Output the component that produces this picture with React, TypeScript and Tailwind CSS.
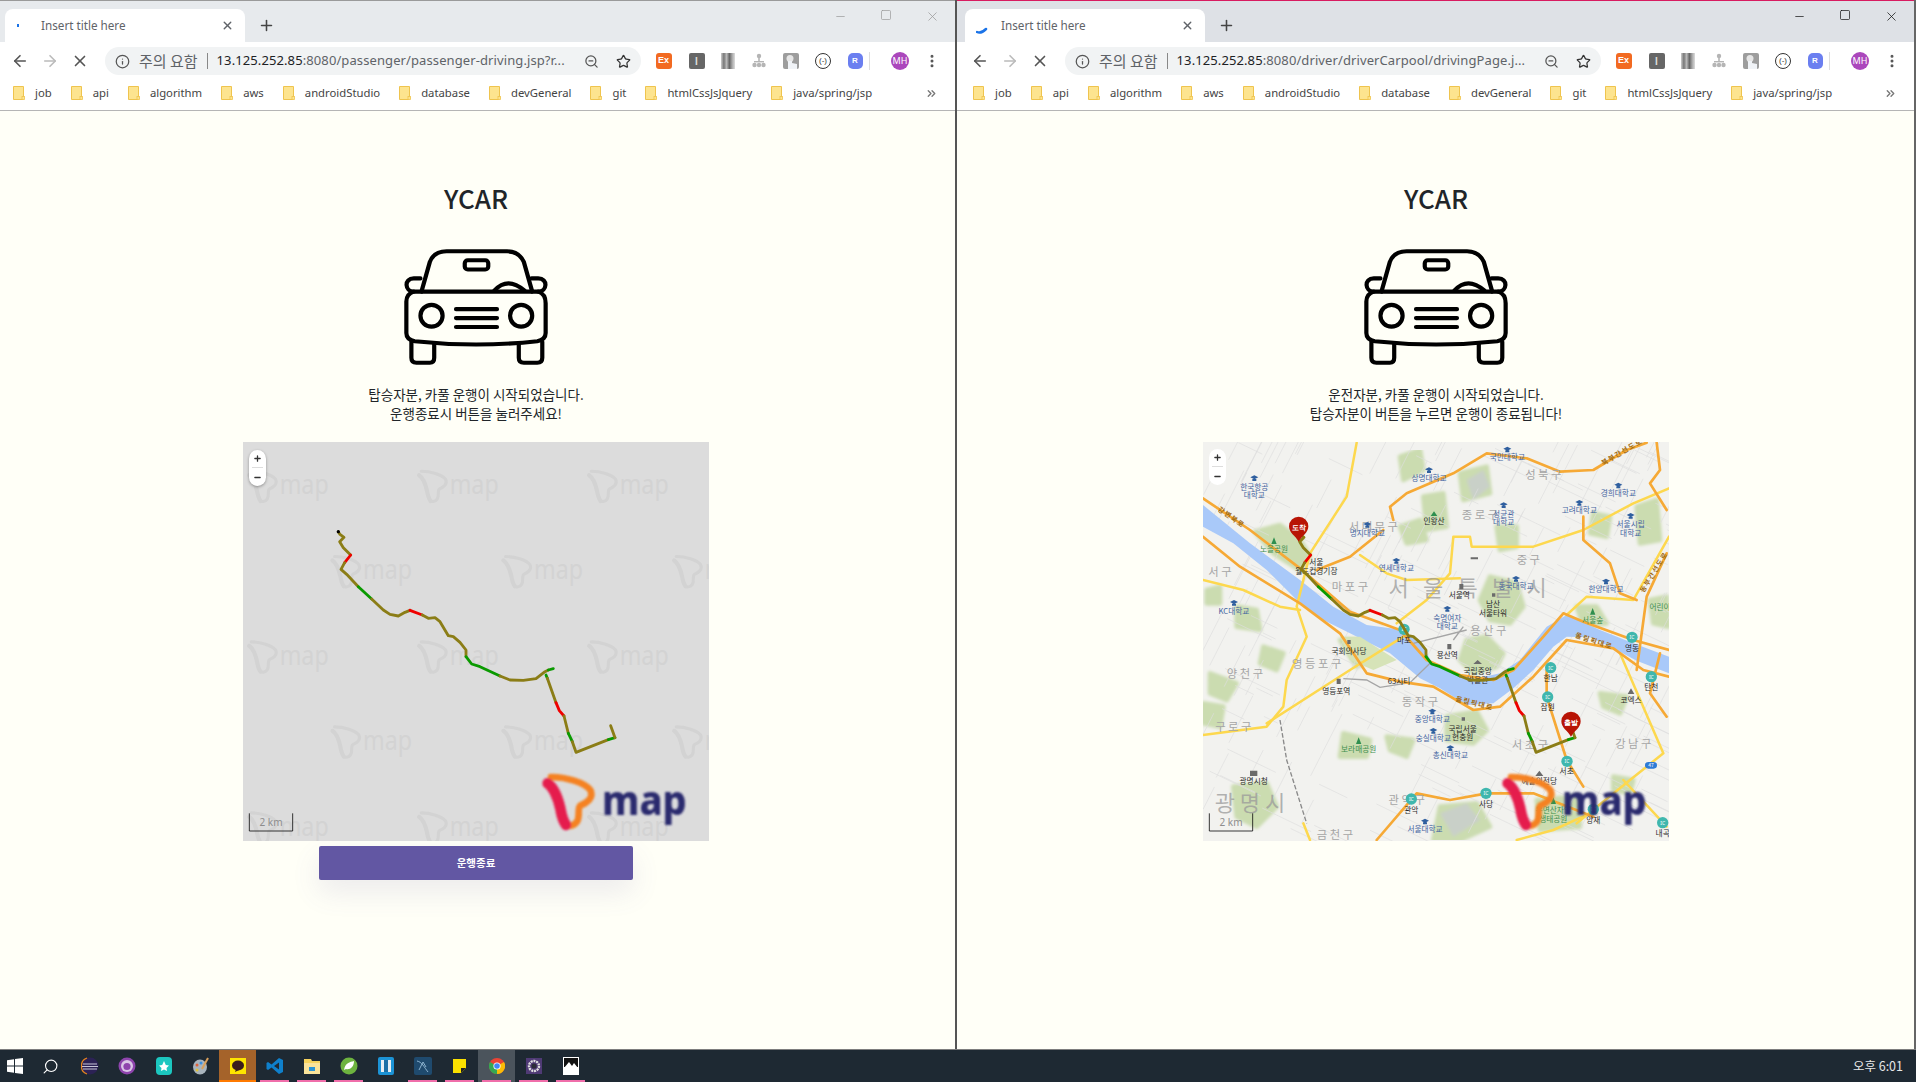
import { ArrowLeft, ArrowRight, X, Info, ZoomOut, Star, EllipsisVertical, Plus, Minus, Square, ChevronsRight, Search } from "lucide-react";

const OLIVE = "#8b7d16";
const route: [string, string][] = [
  [OLIVE, "M295,276 L300,283 L312,292 L299,305 L310,323 L332,345"],
  ["#f00000", "M332,345 L314,368"],
  [OLIVE, "M314,368 L303,388 L320,403 L355,440"],
  ["#0a9a00", "M355,440 L395,477"],
  [OLIVE, "M395,477 L430,510 L450,523 L475,528 L495,517 L510,511"],
  ["#f00000", "M510,511 L547,525"],
  [OLIVE, "M547,525 L565,535 L585,533 L600,545 L625,587 L640,590 L660,607 L678,630 L678,650"],
  ["#0a9a00", "M678,650 L695,672 L720,680 L780,708"],
  [OLIVE, "M780,708 L810,720 L850,721 L888,716 L915,695 L925,690"],
  ["#0a9a00", "M925,690 L940,686 M918,705 L922,715"],
  [OLIVE, "M922,715 L948,788"],
  ["#f00000", "M948,788 L958,812 L972,828"],
  [OLIVE, "M972,828 L985,880"],
  ["#0a9a00", "M985,880 L997,905"],
  [OLIVE, "M997,905 L1008,937 L1105,899"],
  ["#0a9a00", "M1105,899 L1125,893"],
  [OLIVE, "M1125,893 L1112,857"],
];

function Route() {
  return (
    <g fill="none" strokeWidth="8.5" strokeLinejoin="round" strokeLinecap="round">
      {route.map(([c, d], i) => (
        <path key={i} d={d} stroke={c} />
      ))}
    </g>
  );
}

function TShape({ x, y, s, mono }: { x: number; y: number; s: number; mono?: string }) {
  return (
    <g transform={`translate(${x} ${y}) scale(${s})`} fill="none" strokeLinecap="round" strokeLinejoin="round">
      <path d="M30,6 C75,6 130,22 148,45 C160,70 135,85 118,92 C108,100 118,125 108,140 C100,152 85,155 75,150" stroke={mono ?? "#f58220"} strokeWidth={mono ? 15 : 20} />
      <path d="M20,25 C35,35 50,65 58,100 C62,125 68,140 75,150" stroke={mono ?? "#e51f4e"} strokeWidth={mono ? 20 : 32} />
    </g>
  );
}

function Logo() {
  return (
    <g filter="url(#logoblur)">
      <TShape x={903} y={1005} s={1} />
      <text x={1086} y={1126} fontSize={124} fontWeight={800} fill="#2b2a6e" textLength={254} lengthAdjust="spacingAndGlyphs" fontFamily="'Noto Sans', sans-serif">
        map
      </text>
    </g>
  );
}

const marks = [
  [15, 90], [525, 90], [1035, 90],
  [265, 346], [778, 346], [1290, 346],
  [15, 602], [525, 602], [1035, 602],
  [265, 857], [778, 857], [1290, 857],
  [15, 1115], [525, 1115], [1035, 1115],
];

function Watermarks() {
  return (
    <g>
      {marks.map(([x, y], i) => (
        <g key={i}>
          <TShape x={x} y={y} s={0.62} mono="#d3d3d3" />
          <text x={x + 104} y={y + 72} fontSize={84} fill="#d3d3d3" textLength={147} lengthAdjust="spacingAndGlyphs" fontFamily="'Noto Sans', sans-serif">
            map
          </text>
        </g>
      ))}
    </g>
  );
}

function Scale() {
  return (
    <g>
      <path d="M28,1120 V1173 H158 V1120" fill="none" stroke="#111" strokeWidth="2.5" />
      <text x={93} y={1157} fontSize={30} textAnchor="middle" fill="#8d8d8d" fontFamily="'Noto Sans', sans-serif">
        2 km
      </text>
    </g>
  );
}

const river =
  "M9,195 L150,310 L300,420 L400,500 L500,555 L610,570 L670,620 L700,675 L820,718 L900,700 L960,660 L1040,560 L1100,525 L1200,570 L1300,610 L1407,650 L1407,700 L1310,662 L1240,625 L1170,592 L1100,590 L1060,620 L1000,690 L940,745 L880,790 L800,795 L720,745 L660,715 L570,640 L450,580 L370,540 L300,490 L200,390 L100,310 L9,260 Z";

const parks = [
  "M165,275 L240,255 L300,300 L330,350 L300,390 L220,340 Z",
  "M800,600 L860,590 L910,640 L890,680 L820,700 L780,660 Z",
  "M870,410 L950,430 L970,500 L930,550 L870,540 L840,480 Z",
  "M740,830 L830,815 L860,870 L820,910 L740,900 Z",
  "M420,600 L500,600 L520,650 L470,680 Z",
  "M600,50 L660,30 L670,90 L610,120 Z",
  "M1130,500 L1190,500 L1220,550 L1150,555 Z",
  "M430,880 L510,900 L500,950 L420,950 Z",
  "M100,1040 L200,1030 L230,1100 L170,1160 L110,1130 Z",
  "M720,1100 L830,1090 L870,1160 L780,1200 L700,1200 Z",
  "M1310,200 L1370,180 L1380,300 L1320,310 Z",
  "M30,700 L110,730 L80,780 L30,760 Z",
  "M110,500 L170,510 L180,570 L110,560 Z",
  "M1200,760 L1280,770 L1260,820 L1210,800 Z",
  "M1010,1080 L1130,1070 L1140,1160 L1020,1170 Z",
  "M670,170 L730,160 L740,260 L680,270 Z",
  "M890,260 L950,260 L950,320 L900,330 Z",
  "M780,100 L860,80 L870,160 L790,180 Z",
  "M10,790 L70,800 L60,860 L10,850 Z",
  "M560,890 L640,900 L620,950 L570,930 Z",
  "M600,260 L660,240 L680,300 L620,310 Z",
  "M1350,480 L1400,470 L1405,560 L1360,550 Z",
  "M20,450 L60,440 L60,490 L20,490 Z",
  "M1240,1010 L1300,1020 L1290,1060 L1240,1050 Z",
  "M190,620 L250,640 L230,690 L180,670 Z",
  "M1180,220 L1230,230 L1220,290 L1170,280 Z",
];

const orange = [
  "M9,175 L150,270 L300,385 L450,515 L600,570 L680,660 L780,705 L880,720 L940,690 L1030,590 L1090,520 L1150,545 L1300,600 L1407,630",
  "M9,290 L120,380 L300,490 L420,580 L500,700 L600,725 L700,740 L820,810 L900,800 L1000,710 L1100,600 L1240,625 L1330,690 L1407,710",
  "M580,240 L570,200 L620,160 L760,100 L860,40 L980,55 L1080,95 L1180,90 L1280,30 L1340,8",
  "M1370,8 L1380,90 L1350,130 L1400,210",
  "M350,390 L450,350 L550,270",
  "M1150,230 L1150,300 L1230,370 L1260,460 L1310,480",
  "M530,1200 L650,1060 L750,1080 L860,1060 L1000,1060 L1180,1130",
  "M1040,690 L1040,770 L1100,960 L1150,1040",
  "M1400,340 L1340,470 L1310,690",
  "M1380,640 L1350,760 L1400,830",
];
const yellow = [
  "M470,8 L440,170 L330,340 L290,500 L320,590 L260,720 L250,800 L200,860 L9,885",
  "M590,550 L680,480 L750,400 L760,290 L810,290 L815,320 L1000,320 L1150,270 L1300,190 L1407,145",
  "M200,850 L450,690 L610,590",
  "M1260,640 L1390,940 L1290,1020 L1130,1150",
  "M480,345 L560,400 L620,420 L780,415",
  "M1100,525 L1160,470 L1300,480 L1407,290",
  "M9,420 L130,450 L240,500 L300,510",
  "M950,1200 L1060,1170 L1170,1120",
  "M1270,1020 L1400,1160",
  "M310,1150 L330,1200",
];

let seed = 7;
const rnd = () => {
  seed = (seed * 16807) % 2147483647;
  return seed / 2147483647;
};
const thin = Array.from({ length: 300 }, () => {
  const x = 9 + rnd() * 1398;
  const y = 6 + rnd() * 1197;
  const a = rnd() > 0.5 ? 0.45 : -1.1;
  const l = 40 + rnd() * 170;
  return [x, y, x + Math.cos(a) * l, y + Math.sin(a) * l];
});

type L = [number, number, string];
const blue: L[] = [
  [163, 143, "한국항공"], [163, 167, "대학교"], [687, 114, "상명대학교"], [922, 52, "국민대학교"], [1255, 160, "경희대학교"],
  [1138, 212, "고려대학교"], [911, 223, "성균관"], [911, 248, "대학교"], [1292, 254, "서울시립"], [1292, 279, "대학교"],
  [502, 279, "명지대학교"], [589, 385, "연세대학교"], [948, 439, "동국대학교"], [1218, 447, "한양대학교"], [742, 535, "숙명여자"],
  [742, 559, "대학교"], [102, 513, "KC대학교"], [697, 837, "중앙대학교"], [700, 895, "숭실대학교"], [751, 947, "총신대학교"],
  [675, 1167, "서울대학교"],
];
const caps: [number, number][] = [
  [163, 112], [687, 88], [922, 26], [1255, 134], [1138, 186], [911, 193], [1292, 225], [502, 252], [589, 360], [948, 414], [1218, 422],
  [742, 504], [102, 486], [697, 812], [700, 870], [751, 922], [675, 1142],
];
const green: L[] = [[222, 327, "노을공원"], [1178, 540, "서울숲"], [476, 929, "보라매공원"], [1380, 503, "어린이"], [1060, 1112, "우면산자연"], [1060, 1138, "생태공원"]];
const dark: L[] = [
  [349, 368, "서울"], [349, 394, "월드컵경기장"], [778, 465, "서울역"], [879, 494, "남산"], [879, 519, "서울타워"], [612, 600, "마포"],
  [742, 646, "용산역"], [447, 633, "국회의사당"], [597, 725, "63시티"], [409, 753, "영등포역"], [833, 695, "국립중앙"], [833, 722, "박물관"],
  [788, 867, "국립서울"], [788, 892, "현충원"], [1052, 715, "한남"], [1043, 803, "잠원"], [1296, 624, "영동"], [1354, 741, "탄천"],
  [1293, 780, "코엑스"], [1100, 995, "서초"], [858, 1093, "사당"], [634, 1110, "관악"], [1180, 1140, "양재"], [1388, 1180, "내곡"],
  [161, 1025, "광명시청"], [1018, 1025, "예술의전당"], [702, 244, "인왕산"],
];
const district: L[] = [
  [1030, 106, "성 북 구"], [840, 224, "종 로 구"], [520, 260, "서 대 문 구"], [450, 440, "마 포 구"], [985, 360, "중 구"], [865, 572, "용 산 구"],
  [350, 672, "영 등 포 구"], [135, 702, "양 천 구"], [100, 862, "구 로 구"], [660, 785, "동 작 구"], [990, 915, "서 초 구"], [1300, 912, "강 남 구"],
  [620, 1080, "관 악 구"], [405, 1185, "금 천 구"], [60, 395, "서 구"],
];
const ics: [number, number][] = [[612, 568], [1052, 683], [1043, 771], [1296, 592], [1354, 710], [1101, 964], [858, 1060], [634, 1077], [1180, 1108], [1388, 1148]];
const roadNames: [number, number, number, string][] = [
  [90, 238, 35, "강변북로"], [1180, 610, 18, "올림픽대로"], [822, 797, 14, "올림픽대로"], [1368, 400, -58, "동부간선도로"], [1270, 42, -30, "북부간선도로"],
];

function Pin({ x, y, label }: { x: number; y: number; label: string }) {
  return (
    <g>
      <path d={`M${x},${y + 40} C${x - 10},${y + 22} ${x - 29},${y + 14} ${x - 29},${y - 6} A29,29 0 1 1 ${x + 29},${y - 6} C${x + 29},${y + 14} ${x + 10},${y + 22} ${x},${y + 40} Z`} fill="#b81405" />
      <text x={x} y={y + 4} fontSize={22} fill="#fff" textAnchor="middle" fontWeight={700}>
        {label}
      </text>
    </g>
  );
}

function StreetMap() {
  return (
    <g fontFamily="'Noto Sans CJK KR', sans-serif">
      <rect x="9" y="6" width="1398" height="1197" fill="#f2f2ef" />
      <g filter="url(#soft)">
        {parks.map((d, i) => (
          <path key={i} d={d} fill="#cbdcb0" stroke="#cbdcb0" strokeWidth="14" strokeLinejoin="round" />
        ))}
        <path d="M800,120 L850,90 L870,140 L820,180 Z M720,1120 L800,1090 L840,1140 L760,1190 Z" fill="#c9d0c8" />
      </g>
      {thin.map((l, i) => (
        <line key={i} x1={l[0]} y1={l[1]} x2={l[2]} y2={l[3]} stroke="#dedede" strokeWidth="2" />
      ))}
      <path d={river} fill="#a9c9f9" />
      <path d="M420,590 L480,590 L590,660 L520,690 L450,660 Z" fill="#d6e3b8" />
      <path d="M240,840 L260,960 L320,1150" fill="none" stroke="#8a8a8a" strokeWidth="4" strokeDasharray="14 6" />
      <path d="M430,716 L500,720 L540,742 L630,728 L690,670 M640,610 L800,570 M760,600 L790,560" fill="none" stroke="#a5a5a5" strokeWidth="4" />
      <g fill="none" strokeLinejoin="round" strokeLinecap="round">
        {yellow.map((d, i) => (
          <path key={i} d={d} stroke="#fdd84e" strokeWidth="7.5" />
        ))}
        {orange.map((d, i) => (
          <path key={i} d={d} stroke="#f6a935" strokeWidth="8" />
        ))}
      </g>
      <text x={810} y={468} fontSize={66} textAnchor="middle" fill="#9a9a9a" fillOpacity={0.75} letterSpacing={14}>서 울 특 별 시</text>
      <text x={150} y={1112} fontSize={66} textAnchor="middle" fill="#9a9a9a" fillOpacity={0.75}>광 명 시</text>
      {district.map(([x, y, t], i) => (
        <text key={i} x={x} y={y + 12} fontSize={34} textAnchor="middle" fill="#a5a5a5">{t}</text>
      ))}
      {roadNames.map(([x, y, r, t], i) => (
        <text key={i} transform={`translate(${x} ${y}) rotate(${r})`} fontSize={21} fontWeight={700} textAnchor="middle" fill="#a06a10" letterSpacing={4}>{t}</text>
      ))}
      {caps.map(([x, y], i) => (
        <path key={i} d={`M${x - 12},${y} L${x},${y - 6} L${x + 12},${y} L${x},${y + 6} Z M${x - 6},${y + 5} H${x + 6} V${y + 11} H${x - 6} Z`} fill="#2f5f9f" />
      ))}
      {blue.map(([x, y, t], i) => (
        <text key={i} x={x} y={y + 8} fontSize={23} textAnchor="middle" fill="#45659f">{t}</text>
      ))}
      {green.map(([x, y, t], i) => (
        <text key={i} x={x} y={y + 8} fontSize={23} textAnchor="middle" fill="#3f8f4f">{t}</text>
      ))}
      {dark.map(([x, y, t], i) => (
        <text key={i} x={x} y={y + 8} fontSize={23} textAnchor="middle" fill="#2a2a2a">{t}</text>
      ))}
      {ics.map(([x, y], i) => (
        <g key={i}>
          <circle cx={x} cy={y} r={17} fill="#3fb7ae" />
          <text x={x} y={y + 6} fontSize={15} fontFamily="'Noto Sans', sans-serif" textAnchor="middle" fill="#fff">IC</text>
        </g>
      ))}
      <rect x="1335" y="966" width="36" height="20" rx="10" fill="#2e7bd6" />
      <text x={1353} y={982} fontSize={15} textAnchor="middle" fill="#fff">47</text>
      <path d="M222,292 L230,312 H214 Z M702,214 L712,228 H692 Z M1178,504 L1186,524 H1170 Z M476,892 L484,912 H468 Z M1060,1072 L1068,1092 H1052 Z" fill="#2f8f4f" />
      <path d="M812,352 H834 V358 H812 Z M778,432 H790 V448 H778 Z M742,612 H754 V628 H742 Z M410,716 H422 V732 H410 Z M833,660 L846,672 H820 Z M876,460 H886 V470 H876 Z M442,600 H452 V612 H442 Z M785,832 H795 V842 H785 Z M1018,992 L1030,1008 H1006 Z M150,992 H172 V1008 H150 Z M1293,745 L1303,762 H1283 Z" fill="#6b6b6b" />
    </g>
  );
}

function MapBox({ street }: { street: boolean }) {
  return (
    <div className={`relative h-[399px] w-[466px] overflow-hidden ${street ? "bg-[#f2f2ef]" : "bg-[#dcdcdc]"}`}>
      <svg className="block h-full w-full" viewBox="9 6 1398 1197" preserveAspectRatio="none">
        <defs>
          <filter id="logoblur" x="-10%" y="-10%" width="120%" height="120%">
            <feGaussianBlur stdDeviation="2.5" />
          </filter>
          <filter id="soft" x="0" y="0" width="100%" height="100%">
            <feGaussianBlur stdDeviation="4" />
          </filter>
        </defs>
        {street ? <StreetMap /> : <Watermarks />}
        <Route />
        {!street && <circle cx="295" cy="275" r="5" fill="#000" />}
        {street && (
          <>
            <Pin x={296} y={265} label="도착" />
            <Pin x={1113} y={850} label="출발" />
          </>
        )}
        <Scale />
        <Logo />
      </svg>
      <div className={`absolute left-[6px] flex h-[36px] w-[17px] flex-col items-center rounded-full bg-white ${street ? "top-[7px]" : "top-[8px] shadow-[0_1px_3px_rgba(0,0,0,0.35)]"}`}>
        <div className="flex h-[18px] items-center border-b border-[#ddd] px-[1px] text-[#333]">
          <Plus size={9} strokeWidth={3.5} />
        </div>
        <div className="flex h-[18px] items-center text-[#333]">
          <Minus size={9} strokeWidth={3.5} />
        </div>
      </div>
    </div>
  );
}

function Car() {
  return (
    <svg className="h-[118px] w-[146px]" viewBox="160 233 435 357" preserveAspectRatio="none" fill="none" stroke="#000" strokeWidth="12.5" strokeLinecap="round" strokeLinejoin="round">
      <path d="M215,365 L240,275 Q252,243 290,243 H470 Q505,243 520,275 L545,365" />
      <rect x="344" y="270" width="70" height="28" rx="9" />
      <path d="M432,362 Q472,318 522,362" />
      <path d="M192,365 H563 Q585,372 585,400 V490 Q585,510 560,515 Q378,535 195,515 Q170,510 170,490 V395 Q170,372 192,365 Z" />
      <path d="M212,325 H192 C162,325 165,365 192,365 M543,325 H563 C593,325 590,365 563,365" />
      <circle cx="245" cy="438" r="33" />
      <circle cx="512" cy="438" r="33" />
      <path d="M318,418 H440 M318,445 H440 M318,472 H440" />
      <path d="M185,517 V565 Q185,580 200,580 H240 Q253,580 253,565 V523 M505,523 V565 Q505,580 520,580 H560 Q575,580 575,565 V517" />
    </svg>
  );
}

function Folder() {
  return (
    <svg width="12" height="14" viewBox="0 0 12 14" className="shrink-0">
      <path d="M0.5,0.5 H10.5 V12 H9.5 V13.5 H0.5 Z" fill="#fde48f" stroke="#efc44e" />
      <rect x="9" y="10.5" width="2.5" height="3" fill="#fde48f" stroke="#efc44e" strokeWidth="0.8" />
    </svg>
  );
}

const bookmarks = ["job", "api", "algorithm", "aws", "androidStudio", "database", "devGeneral", "git", "htmlCssJsJquery", "java/spring/jsp"];

function Extensions() {
  return (
    <div className="flex h-full items-center">
      <div className="flex w-[33px] justify-center">
        <div className="flex h-[16px] w-[16px] items-center justify-center rounded-[3px] bg-[#f26a21] font-['Liberation_Sans'] text-[9px] font-bold text-white">Ex</div>
      </div>
      <div className="flex w-[33px] justify-center">
        <div className="flex h-[16px] w-[16px] items-center justify-center rounded-[2px] bg-[#666] font-['Liberation_Sans'] text-[10px] font-bold text-[#ddd]">I</div>
      </div>
      <div className="flex w-[30px] justify-center">
        <div className="h-[16px] w-[14px] bg-[linear-gradient(90deg,#ccc,#777,#bbb,#666,#aaa,#ddd)]" />
      </div>
      <div className="flex w-[32px] justify-center">
        <svg width="14" height="16" viewBox="0 0 14 16" fill="#b5b5b5">
          <circle cx="7" cy="3" r="2.2" />
          <rect x="6.2" y="5" width="1.6" height="4" />
          <rect x="2" y="8" width="10" height="1.4" />
          <circle cx="2.5" cy="12" r="2.2" />
          <circle cx="7" cy="12" r="2.2" />
          <circle cx="11.5" cy="12" r="2.2" />
        </svg>
      </div>
      <div className="flex w-[32px] justify-center">
        <svg width="16" height="16" viewBox="0 0 16 16">
          <rect width="16" height="16" rx="2" fill="#9d9d9d" />
          <circle cx="7" cy="5.5" r="3.5" fill="#e6e6e6" />
          <path d="M5,16 V8 H9 L9,10 L14,11 V16 Z" fill="#f0f3f7" />
        </svg>
      </div>
      <div className="flex w-[32px] justify-center">
        <div className="flex h-[16px] w-[16px] items-center justify-center rounded-full border border-[#333] font-['Liberation_Sans'] text-[8px] text-[#333]">{"(-)"}</div>
      </div>
      <div className="flex w-[32px] justify-center">
        <div className="flex h-[16px] w-[15px] items-center justify-center rounded-[5px] bg-[#6b7ff0] font-['Liberation_Sans'] text-[8px] font-bold text-white">R</div>
      </div>
    </div>
  );
}

function BrowserWindow({ active, urlTail, lines, street, button }: { active: boolean; urlTail: string; lines: string[]; street: boolean; button?: boolean }) {
  const ctl = active ? "text-[#111]" : "text-[#999]";
  return (
    <div className="flex h-full w-full flex-col">
      <div className={`flex h-[42px] shrink-0 items-end border-t ${active ? "border-[#d81b60] bg-[#dee1e6] pl-[8px]" : "border-[#9a9a9a] bg-[#e7eaed] pl-[5px]"}`}>
        <div className="flex h-[33px] w-[240px] items-center rounded-t-[8px] bg-white pl-[9px] pr-[11px]">
          <div className="flex w-[27px] items-center">
            {active ? (
              <svg width="12" height="12" viewBox="0 0 12 12" className="ml-[2px] mt-[8px]">
                <path d="M1,8 Q5,10 10,5" fill="none" stroke="#1a73e8" strokeWidth="2.5" strokeLinecap="round" />
              </svg>
            ) : (
              <div className="ml-[3px] h-[3px] w-[2px] bg-[#1a73e8]" />
            )}
          </div>
          <span className="flex-1 font-['Noto_Sans'] text-[11.7px] text-[#5f6368]">Insert title here</span>
          <X size={13} strokeWidth={2.5} className="text-[#5f6368]" />
        </div>
        <div className="flex h-[33px] w-[42px] items-center justify-center">
          <Plus size={17} strokeWidth={2.2} className="text-[#444]" />
        </div>
        <div className="flex-1" />
        <div className={`flex h-[41px] w-[138px] shrink-0 items-start pt-[8px] ${ctl}`}>
          <div className="flex w-[46px] justify-center pt-[1px]"><Minus size={13} strokeWidth={1.3} /></div>
          <div className="flex w-[46px] justify-center"><Square size={12} strokeWidth={1.4} /></div>
          <div className="flex w-[46px] justify-center"><X size={15} strokeWidth={1.2} /></div>
        </div>
      </div>
      <div className={`flex h-[38px] shrink-0 items-center bg-white ${active ? "pl-[3px]" : ""}`}>
        <div className="flex w-[32px] justify-center pl-[7px] text-[#555]"><ArrowLeft size={18} strokeWidth={2.2} /></div>
        <div className="flex w-[32px] justify-center pl-[4px] text-[#bbb]"><ArrowRight size={18} strokeWidth={2.2} /></div>
        <div className="flex w-[32px] justify-center text-[#555]"><X size={18} strokeWidth={2.2} /></div>
        <div className="ml-[9px] flex h-[28px] w-[536px] shrink-0 items-center rounded-full bg-[#f1f3f4] pl-[10px] pr-[8px]">
          <Info size={15} strokeWidth={2} className="shrink-0 text-[#555]" />
          <span className="ml-[9px] whitespace-nowrap font-['Noto_Sans_CJK_KR'] text-[15px] text-[#5f6368]">주의 요함</span>
          <span className="ml-[9px] h-[16px] w-px bg-[#888]" />
          <span className="ml-[9px] flex-1 whitespace-nowrap font-['Noto_Sans'] text-[13px] tracking-[0.1px] text-[#5f6368]">
            <span className="text-[#202124]">13.125.252.85</span>
            {urlTail}
          </span>
          <ZoomOut size={15} strokeWidth={2} className="shrink-0 text-[#555]" />
          <Star size={15} strokeWidth={2} className="ml-[17px] mr-[2px] shrink-0 text-[#333]" />
        </div>
        <div className="ml-[6px]"><Extensions /></div>
        <div className="ml-[-2px] h-[18px] w-px bg-[#ddd]" />
        <div className="ml-[21px] flex h-[18px] w-[18px] items-center justify-center rounded-full bg-[#ab47bc] font-['Noto_Sans'] text-[9px] text-white">MH</div>
        <div className="ml-[15px] text-[#555]"><EllipsisVertical size={16} strokeWidth={2.5} /></div>
      </div>
      <div className={`flex h-[31px] shrink-0 items-center border-b border-[#b5b5b5] bg-white pb-[4px] ${active ? "pl-[16px]" : "pl-[13px]"}`}>
        {bookmarks.map((b) => (
          <div key={b} className="mr-[19px] flex items-center">
            <Folder />
            <span className="ml-[10px] font-['Noto_Sans'] text-[11.3px] text-[#444]">{b}</span>
          </div>
        ))}
        <div className="flex-1" />
        <div className="mr-[17px] text-[#777]"><ChevronsRight size={13} strokeWidth={2.5} /></div>
      </div>
      <div className={`flex flex-1 bg-[#fffff7] ${active ? "pl-[3px]" : ""}`}>
        <div className="flex w-[952px] shrink-0 flex-col items-center pt-[69px]">
          <h1 className="h-[36px] font-['Noto_Sans_CJK_KR'] text-[26px] font-medium leading-[36px] text-[#212529]">YCAR</h1>
          <div className="mt-[32px] h-[118px]"><Car /></div>
          <div className="mt-[19px] text-center font-['Noto_Sans_CJK_KR'] text-[13.5px] leading-[19px] text-[#212529]">
            {lines.map((l) => (
              <p key={l}>{l}</p>
            ))}
          </div>
          <div className="mt-[19px]"><MapBox street={street} /></div>
          {button && (
            <button className="mt-[5px] h-[34px] w-[314px] rounded-[2px] bg-[#6257a3] font-['Noto_Sans_CJK_KR'] text-[10.5px] font-bold text-white shadow-[0_12px_28px_rgba(98,87,163,0.12)]">
              운행종료
            </button>
          )}
        </div>
      </div>
    </div>
  );
}

function Win() {
  return (
    <svg width="16" height="16" viewBox="0 0 16 16" fill="#fff">
      <path d="M0,2.2 L7,1.2 V7.5 H0 Z M8,1 L16,0 V7.5 H8 Z M0,8.5 H7 V14.8 L0,13.8 Z M8,8.5 H16 V16 L8,15 Z" />
    </svg>
  );
}

const task: { n: string; pink?: boolean; on?: string; el: React.ReactNode }[] = [
  { n: "eclipse", el: <svg width="18" height="18" viewBox="0 0 18 18"><circle cx="9" cy="9" r="8.5" fill="#2c2255" /><path d="M2,7 H16 M1,9.5 H17 M2,12 H16" stroke="#c8c6d8" strokeWidth="1.2" /><path d="M6,1 A8.5,8.5 0 0 0 6,17" fill="none" stroke="#e8851f" strokeWidth="1.3" /></svg> },
  { n: "cat", el: <svg width="18" height="18" viewBox="0 0 18 18"><circle cx="9" cy="9" r="8.5" fill="#8e44ad" /><circle cx="9" cy="9" r="6" fill="#d9c6e6" /><circle cx="9" cy="9.5" r="3.6" fill="#8e44ad" /></svg> },
  { n: "star", el: <svg width="16" height="18" viewBox="0 0 16 18"><rect width="16" height="18" rx="4" fill="#1cc7c0" /><path d="M8,4 L9.8,8 L13,8.5 L10.5,11 L11,14 L8,12.5 L5,14 L5.5,11 L3,8.5 L6.2,8 Z" fill="#fff" /></svg> },
  { n: "paint", el: <svg width="18" height="18" viewBox="0 0 18 18"><ellipse cx="8" cy="10" rx="7" ry="7.5" fill="#a9b4bd" /><circle cx="5" cy="8" r="1.5" fill="#e0613a" /><circle cx="9" cy="6" r="1.5" fill="#3a8fe0" /><circle cx="5" cy="13" r="1.5" fill="#e0c23a" /><path d="M10,12 L16,1" stroke="#d9a05b" strokeWidth="2" /></svg> },
  { n: "kakao", on: "kakao", el: <svg width="16" height="16" viewBox="0 0 16 16"><rect width="16" height="16" fill="#fee500" /><ellipse cx="8" cy="7.5" rx="6" ry="5" fill="#3a1d1d" /><path d="M6,11 L5,14 L9,12 Z" fill="#3a1d1d" /></svg> },
  { n: "vscode", pink: true, el: <svg width="18" height="18" viewBox="0 0 18 18"><path d="M13,1 L17,3 V15 L13,17 L5.5,10.5 L2,13 L0.5,12 V6 L2,5 L5.5,7.5 Z M13,5.5 L8,9 L13,12.5 Z" fill="#0f80cc" fillRule="evenodd" /></svg> },
  { n: "folder", pink: true, el: <svg width="16" height="15" viewBox="0 0 16 15"><path d="M0,0 H7 L8,2 H16 V15 H0 Z" fill="#f6d25d" /><rect x="0" y="4" width="16" height="11" fill="#fbe39a" /><rect x="5" y="8" width="6" height="4" fill="#2a94d6" /></svg> },
  { n: "spring", pink: true, el: <svg width="18" height="18" viewBox="0 0 18 18"><circle cx="9" cy="9" r="8.5" fill="#6db33f" /><path d="M4,13 C5,6 10,5 14,4 C14,10 10,13 6,12 Z" fill="#fff" /></svg> },
  { n: "box", el: <svg width="16" height="18" viewBox="0 0 16 18"><rect width="16" height="18" rx="2" fill="#1c93d6" /><rect x="3" y="3" width="10" height="12" fill="#e8eef3" /><rect x="6" y="3" width="4" height="12" fill="#1c6fa6" /></svg> },
  { n: "mysql", pink: true, el: <svg width="18" height="18" viewBox="0 0 18 18"><rect width="18" height="18" rx="2" fill="#1f4a6e" /><path d="M3,4 C8,5 10,10 14,15 M5,13 L9,5 L12,10" fill="none" stroke="#8db4d1" strokeWidth="1" /></svg> },
  { n: "sticky", pink: true, el: <svg width="13" height="14" viewBox="0 0 13 14"><path d="M0,0 H13 V9 L8,14 H0 Z" fill="#fce100" /><path d="M8,14 L8,9 H13 Z" fill="#222" /></svg> },
  { n: "chrome", pink: true, on: "chrome", el: <svg width="16" height="16" viewBox="0 0 16 16"><circle cx="8" cy="8" r="8" fill="#ea4335" /><path d="M8,8 L1,4 A8,8 0 0 0 8,16 Z" fill="#34a853" /><path d="M8,8 L15,4 A8,8 0 0 1 8,16 Z" fill="#fbbc05" /><circle cx="8" cy="8" r="3.6" fill="#fff" /><circle cx="8" cy="8" r="2.8" fill="#4285f4" /></svg> },
  { n: "gear", pink: true, el: <svg width="16" height="16" viewBox="0 0 16 16"><rect width="16" height="16" fill="#4f3a75" /><circle cx="8" cy="8" r="5" fill="none" stroke="#e0e0e0" strokeWidth="2.4" strokeDasharray="2 0.8" /><circle cx="8" cy="8" r="2.5" fill="#2c2c38" /></svg> },
  { n: "image", pink: true, el: <svg width="16" height="18" viewBox="0 0 16 18"><rect width="16" height="18" fill="#fff" /><rect x="1" y="1" width="14" height="9" fill="#111" /><path d="M1,11 L6,5 L9,9 L11,6 L15,11 Z" fill="#fff" /></svg> },
];

function Taskbar() {
  return (
    <div className="flex h-[33px] shrink-0 items-stretch border-t border-[#7d7d7d] bg-[#1e2933]">
      <div className="flex w-[30px] items-center justify-center"><Win /></div>
      <div className="flex w-[41px] items-center justify-center text-white"><Search size={17} strokeWidth={1.6} className="-scale-x-100" /></div>
      {task.map((t) => (
        <div key={t.n} className={`relative flex w-[37px] items-center justify-center ${t.on === "kakao" ? "bg-[#a5632a]" : t.on === "chrome" ? "bg-[#4b545c]" : ""}`}>
          {t.el}
          {t.pink && <div className="absolute bottom-0 left-[4px] right-[4px] h-[2px] bg-[#f06eaa]" />}
          {t.on === "kakao" && <div className="absolute bottom-0 left-0 right-0 h-[2px] bg-[#ff7a00]" />}
        </div>
      ))}
      <div className="flex-1" />
      <div className="flex items-center pr-[13px] font-['Noto_Sans_CJK_KR'] text-[12.5px] text-[#e8e8e8]">오후 6:01</div>
    </div>
  );
}

export default function App() {
  return (
    <div className="flex h-[1082px] w-[1916px] flex-col overflow-hidden bg-[#fffff7]">
      <div className="flex min-h-0 flex-1">
        <div className="h-full w-[955px] shrink-0">
          <BrowserWindow
            active={false}
            urlTail=":8080/passenger/passenger-driving.jsp?r..."
            lines={["탑승자분, 카풀 운행이 시작되었습니다.", "운행종료시 버튼을 눌러주세요!"]}
            street={false}
            button
          />
        </div>
        <div className="w-[2px] shrink-0 bg-[#555]" />
        <div className="h-full min-w-0 flex-1 border-r-2 border-[#666]">
          <BrowserWindow
            active
            urlTail=":8080/driver/driverCarpool/drivingPage.j..."
            lines={["운전자분, 카풀 운행이 시작되었습니다.", "탑승자분이 버튼을 누르면 운행이 종료됩니다!"]}
            street
          />
        </div>
      </div>
      <Taskbar />
    </div>
  );
}
